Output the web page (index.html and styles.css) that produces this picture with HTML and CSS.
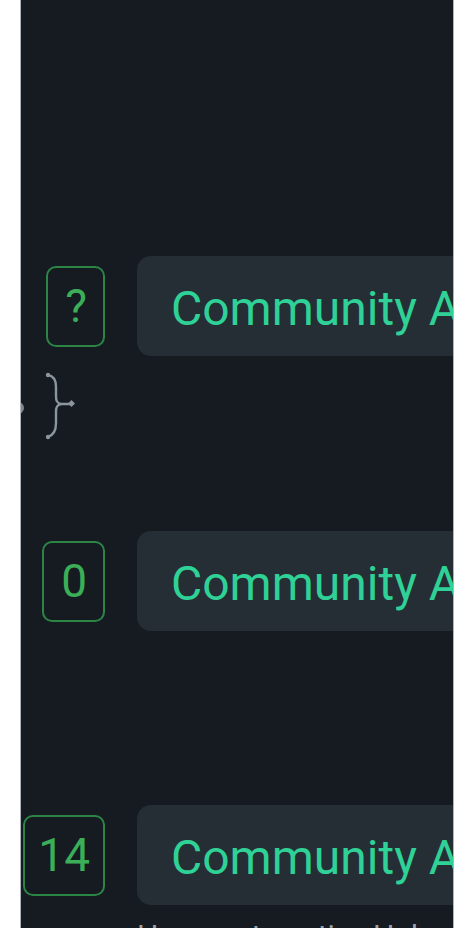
FILE: index.html
```html
<!DOCTYPE html>
<html>
<head lang="en">
    <meta charset="UTF-8">
    <title>Community</title>
    <link rel="stylesheet" href="styles.css">
</head>
<body>
<div id="panel">
    <div class="row">
        <div class="num"><span class="badge">?</span></div>
        <div class="card">Community Apps</div>
    </div>
    <div class="note">
        <span class="dot"></span>
        <svg class="branch" width="36" height="68" viewBox="0 0 36 68">
            <circle cx="4" cy="3" r="2.2" fill="#8b969c"/>
            <circle cx="4" cy="65" r="2.2" fill="#8b969c"/>
            <path d="M4 3 C10 4 12 9 12 15 L12 24 C12 29 13 31 17 32 C13 33 12 35 12 40 L12 51 C12 58 10 63 4 65 M17 32 L26 32" fill="none" stroke="#8b969c" stroke-width="2.4" stroke-linecap="round"/>
            <rect x="25" y="29" width="5" height="5" transform="rotate(45 27.5 31.5)" fill="#8b969c"/>
        </svg>
    </div>
    <div class="row">
        <div class="num"><span class="badge">0</span></div>
        <div class="card">Community Apps</div>
    </div>
    <div class="row row-last">
        <div class="num"><span class="badge badge-wide">14</span></div>
        <div class="card">Community Apps</div>
    </div>
    <p class="desc">How we tune tiny Hubs</p>
</div>
</body>
</html>
```
FILE: styles.css
```css
*{
    margin: 0;
    padding: 0;
    box-sizing: border-box;
}
html,body{
    background: #fff;
    height: 100%;
    overflow: hidden;
}
body{
    font-family: Roboto, "Liberation Sans", sans-serif;
}
#panel{
    width: 434px;
    height: 928px;
    margin-left: 20px;
    padding-top: 256px;
    background: #151b21;
    border-left: 1px solid #aeb4b9;
    border-right: 1px solid #aeb4b9;
    overflow: hidden;
}
.row{
    display: flex;
    align-items: center;
    gap: 32px;
    height: 100px;
}
.num{
    flex: 0 0 84px;
    min-width: 0;
    display: flex;
    justify-content: flex-end;
}
.badge{
    flex: none;
    height: 81px;
    padding: 0 16px 0 17px;
    border: 2px solid #2b8645;
    border-radius: 10px;
    color: #3bae58;
    font-size: 46px;
    line-height: 77px;
    white-space: nowrap;
}
.badge-wide{
    padding: 0 13px;
}
.card{
    flex: 0 0 420px;
    height: 100px;
    padding: 3px 0 0 34px;
    background: #242e34;
    border-radius: 14px;
    color: #2fd196;
    font-size: 48px;
    line-height: 100px;
    white-space: nowrap;
}
.note{
    position: relative;
    height: 175px;
    padding: 16px 0 0 23px;
}
.dot{
    position: absolute;
    left: -3px;
    top: 46px;
    width: 6px;
    height: 12px;
    border-radius: 0 6px 6px 0;
    background: #7d878c;
}
.branch{
    display: block;
}
.row-last{
    margin-top: 174px;
}
.desc{
    margin: 13px 0 0 116px;
    color: #9aa3a8;
    font-size: 30px;
    line-height: 36px;
    white-space: nowrap;
}
```
